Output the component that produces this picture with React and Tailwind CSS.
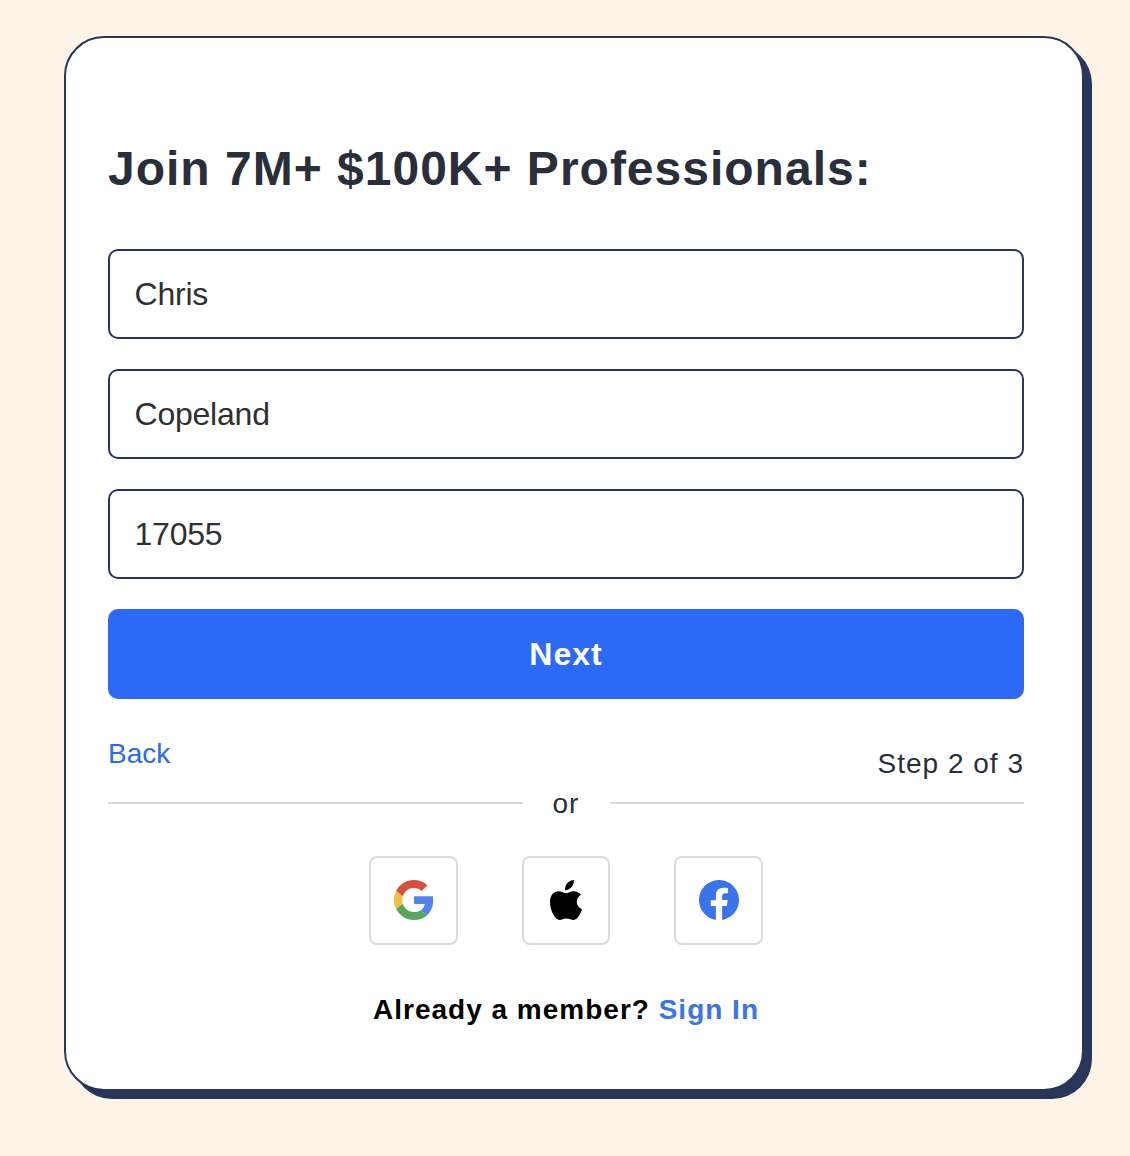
const Field = ({ value }) => (
  <input
    defaultValue={value}
    className="block h-[90px] w-full rounded-[10px] border-2 border-[#293559] bg-white px-[24.5px] text-[32px] tracking-[-0.22px] text-[#303030] outline-none"
  />
);

const Social = ({ label, children }) => (
  <button aria-label={label} className="flex h-[89px] w-[88.5px] items-start justify-center rounded-[8px] border-2 border-[#dbdbdb] bg-white pt-[22px]">
    {children}
  </button>
);

export default function App() {
  return (
    <main className="h-[1156px] w-[1130px] bg-[#fdf3e7] pl-16 pt-9 font-['Liberation_Sans',Arial,sans-serif] text-[#2a2e3a]">
      <section className="h-[1055px] w-[1020px] rounded-[40px] border-2 border-[#293559] bg-white pl-[42px] pr-[58px] pt-[99px] shadow-[8px_8px_0_0_#293559]">
        <h1 className="h-[112px] whitespace-nowrap text-[48px] font-bold leading-[64px] tracking-[1px]">Join 7M+ $100K+ Professionals:</h1>
        <form className="flex flex-col gap-[30px]" onSubmit={(e) => e.preventDefault()}>
          <Field value="Chris" />
          <Field value="Copeland" />
          <Field value="17055" />
          <button className="h-[90px] rounded-[10px] bg-[#2c69f7] text-[32px] font-bold tracking-[1px] text-white">Next</button>
        </form>
        <div className="flex h-[88px] justify-between text-[28px] leading-8">
          <a className="pt-[39px] text-[#2c69f7]">Back</a>
          <span className="pt-[49px] tracking-[1px]">Step 2 of 3</span>
        </div>
        <div className="flex h-8 items-center gap-[30px] text-[28px] leading-8 tracking-[1px]">
          <hr className="flex-1 border-t-2 border-[#d8d8d8]" />
          <span className="w-[27px] pt-0.5">or</span>
          <hr className="flex-1 border-t-2 border-[#d8d8d8]" />
        </div>
        <div className="mt-[37px] flex justify-center gap-16">
          <Social label="Google">
            <svg viewBox="0 0 48 48" className="size-10">
              <path fill="#d94f3d" d="M24 9.5c3.54 0 6.71 1.22 9.21 3.6l6.85-6.85C35.9 2.38 30.47 0 24 0 14.62 0 6.51 5.38 2.56 13.22l7.98 6.19C12.43 13.72 17.74 9.5 24 9.5z" />
              <path fill="#5383ec" d="M46.98 24.55c0-1.57-.15-3.69-.38-5.15H24v9.4h12.94c-.58 2.96-2.26 5.7-4.78 7.4l7.73 6c4.51-4.18 7.09-10.36 7.09-17.65z" />
              <path fill="#f2bf42" d="M10.53 28.59a14.5 14.5 0 0 1 0-9.18l-7.98-6.19a24 24 0 0 0 0 21.56l7.98-6.19z" />
              <path fill="#58a65c" d="M24 48c6.48 0 11.93-2.13 15.89-5.81l-7.73-6c-2.15 1.45-4.92 2.3-8.16 2.3-6.26 0-11.57-4.22-13.47-9.91l-7.98 6.19C6.51 42.62 14.62 48 24 48z" />
            </svg>
          </Social>
          <Social label="Apple">
            <svg viewBox="0 0 40 40" className="size-10" fill="#000">
              <path d="M27.8 0C28.3 5.2 24.4 10.2 19.1 10.2C18.3 5.2 22.7.4 27.8 0Z" />
              <path d="M20.2 13.2C18 13.2 15.5 11.2 12.4 11.2C8 11.2 4 15 4 22C4 31 9.5 40 13.5 40C16 40 17 38.4 20.4 38.4C23.8 38.4 24.8 40 27.3 40C31 40 34.7 34 36 29.2C33 28 30.8 25.2 30.8 21.6C30.8 18.5 32.6 16.2 35 14.8C33.2 12.4 30.5 11.2 27.6 11.2C24.3 11.2 22 13.2 20.2 13.2Z" />
            </svg>
          </Social>
          <Social label="Facebook">
            <svg viewBox="0 0 16 16" className="size-10" fill="#3974ea">
              <path d="M16 8.049c0-4.446-3.582-8.05-8-8.05C3.58 0-.002 3.603-.002 8.05c0 4.017 2.926 7.347 6.75 7.951v-5.625h-2.03V8.05H6.75V6.275c0-2.017 1.195-3.131 3.022-3.131.876 0 1.791.157 1.791.157v1.98h-1.009c-.993 0-1.303.621-1.303 1.258v1.51h2.218l-.354 2.326H9.25V16c3.824-.604 6.75-3.934 6.75-7.951" />
            </svg>
          </Social>
        </div>
        <p className="mt-[49px] text-center text-[28px] font-bold leading-8 tracking-[1px] text-black">
          Already a member? <a className="text-[#3974ea]">Sign In</a>
        </p>
      </section>
    </main>
  );
}
